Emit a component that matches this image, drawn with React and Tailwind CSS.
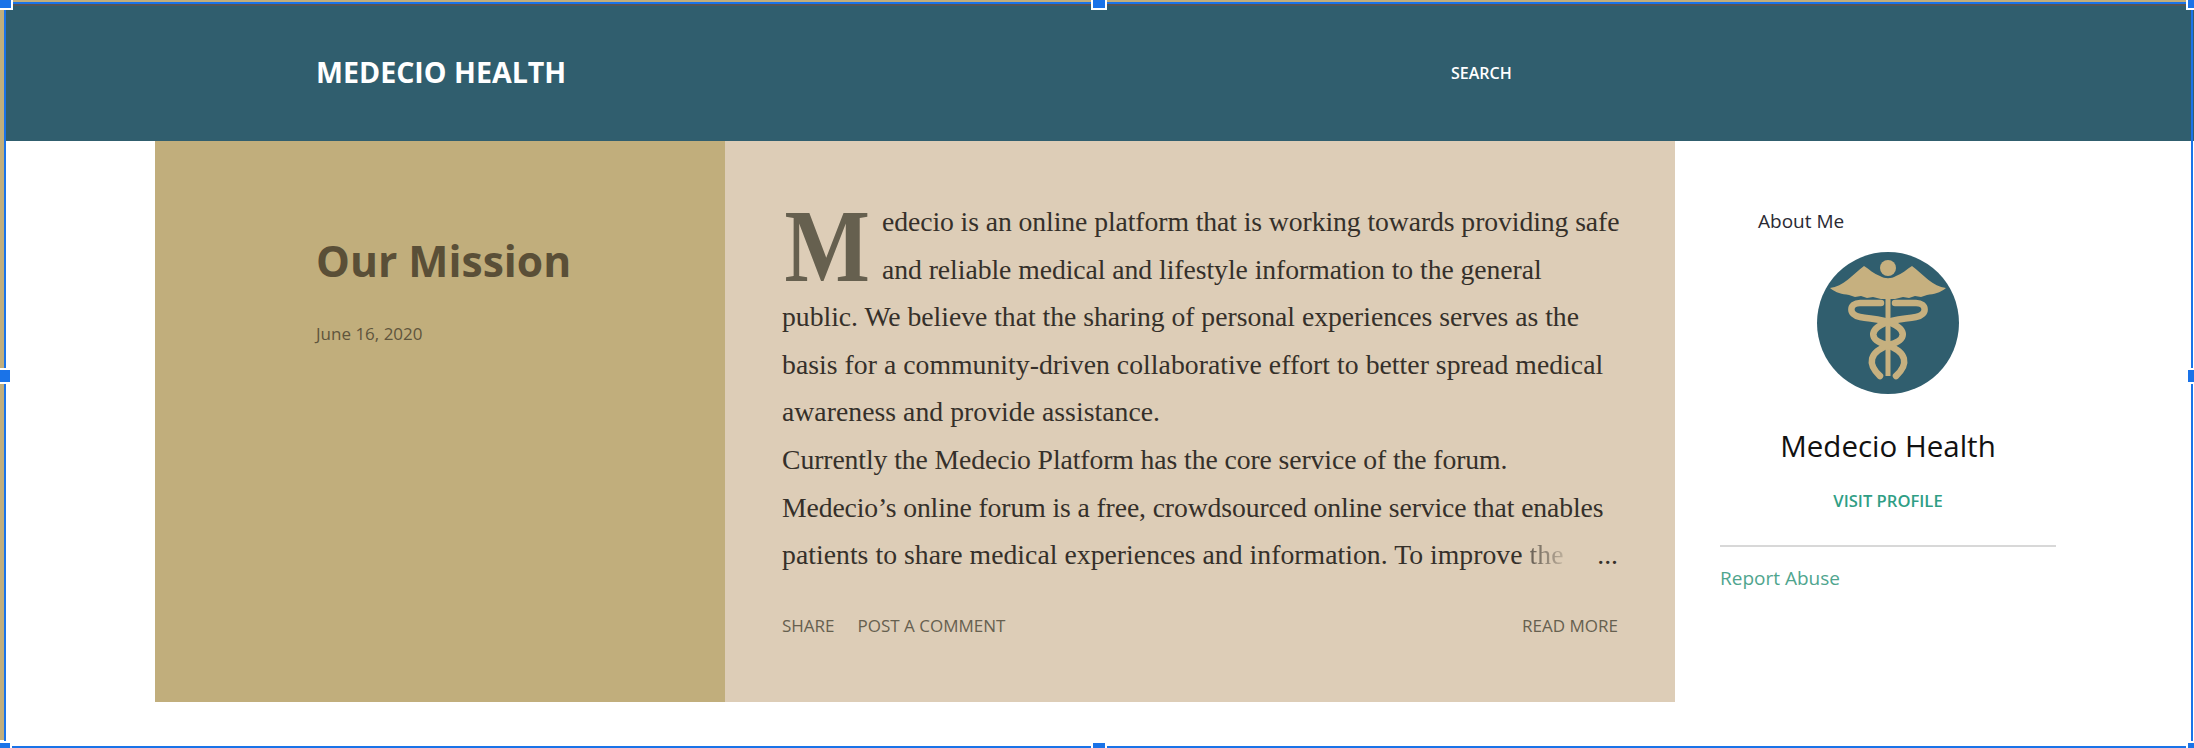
const lines = [
  { text: 'public. We believe that the sharing of personal experiences serves as the', fit: 'tracking-[-0.02px]' },
  { text: 'basis for a community-driven collaborative effort to better spread medical', fit: 'tracking-[0.04px]' },
  { text: 'awareness and provide assistance.', fit: 'tracking-[0.04px]' },
  { text: 'Currently the Medecio Platform has the core service of the forum.', fit: 'tracking-[-0.09px]' },
  { text: 'Medecio’s online forum is a free, crowdsourced online service that enables', fit: 'tracking-[-0.11px]' },
];

const openSans = "font-['Open_Sans',sans-serif]";

const Caduceus = () => (
  <svg viewBox="0 0 142 142" className="w-[142px] h-[142px] rounded-full bg-[#305e6e]">
    <g fill="#c6b07f">
      <circle cx="71" cy="16" r="8" />
      <path d="M13 36 C26 35 36 22 47 14 C52 17 57 22 63 24 C68 27 74 27 79 24 C85 22 90 17 95 14 C106 22 116 35 129 36 C123 41 117 42 110 43 L104 45 L98 44 L92 46 L86 45 L78 47 L64 47 L56 45 L50 46 L44 44 L38 45 L32 43 C25 42 19 41 13 36 Z" />
      <rect x="68.5" y="40" width="5" height="84" />
    </g>
    <g fill="none" stroke="#c6b07f" strokeWidth="6.5" strokeLinecap="round">
      <path d="M64 51 H43 C32 51 31 63 43 65 C55 67 66 67 74 71 C90 78 90 88 72 93 C52 100 50 112 63 124" />
      <path d="M78 51 H99 C110 51 111 63 99 65 C87 67 76 67 68 71 C52 78 52 88 70 93 C90 100 92 112 79 124" />
    </g>
  </svg>
);

const Handle = ({ className }) => (
  <div className={`absolute w-4 h-4 bg-[#1a73e8] border-2 border-white ${className}`} />
);

export default function App() {
  return (
    <div className="relative w-[2194px] h-[748px] overflow-hidden bg-white">
      <div className="w-[2192px] h-[137px] ml-[5px] mt-[4px] bg-[#305e6e] flex items-center text-white">
        <div className={`${openSans} w-[1446px] pl-[311px] text-[28.6px] leading-none font-bold`}>MEDECIO HEALTH</div>
        <div className={`${openSans} text-[16px] font-semibold`}>SEARCH</div>
      </div>

      <main className="flex pl-[155px] items-start">
        <section className="w-[570px] h-[561px] shrink-0 bg-[#c1ae7c] pl-[161px] pt-[91px]">
          <h1 className={`${openSans} text-[42.6px] leading-[56px] font-bold text-[#5a4f37]`}>Our Mission</h1>
          <p className={`${openSans} mt-[34px] text-[17px] leading-6 text-[#5f553c]`}>June 16, 2020</p>
        </section>

        <article className="w-[950px] h-[561px] shrink-0 bg-[#ddcdb7] pl-[57px] pr-[57px] pt-[57px]">
          <div className="font-['Liberation_Serif',serif] text-[27.7px] leading-[47.6px] text-[#35302a] whitespace-nowrap">
            <span className="float-left w-[100px] h-[95px] pl-[3px] text-[104px] leading-[95px] font-bold text-[#66604f] origin-left scale-x-[.87]">M</span>
            <div className="tracking-[-0.08px]">edecio is an online platform that is working towards providing safe</div>
            <div className="tracking-[-0.05px]">and reliable medical and lifestyle information to the general</div>
            {lines.map((line) => (
              <div key={line.text} className={`clear-left ${line.fit}`}>{line.text}</div>
            ))}
            <div className="flex justify-between">
              <span className="tracking-[0.04px]">
                patients to share medical experiences and information. To improve <span className="bg-linear-to-r from-[#35302a]/70 to-[#35302a]/20 bg-clip-text text-transparent">the</span>
              </span>
              <span>...</span>
            </div>
          </div>

          <div className={`${openSans} flex mt-[35px] text-[17px] leading-6 text-[#66604f]`}>
            <span>SHARE</span>
            <span className="ml-[23px]">POST A COMMENT</span>
            <span className="ml-auto">READ MORE</span>
          </div>
        </article>

        <aside className={`${openSans} w-[336px] ml-[45px] pt-[68px]`}>
          <h2 className="pl-[38px] text-[19px] leading-6 text-[#2a2a33]">About Me</h2>
          <div className="flex flex-col items-center">
            <div className="mt-[19px]"><Caduceus /></div>
            <div className="mt-[34px] text-[29.5px] leading-9 text-[#111]">Medecio Health</div>
            <div className="mt-[25px] text-[16.6px] leading-6 font-semibold text-[#2f9e85]">VISIT PROFILE</div>
          </div>
          <hr className="mt-[32px] border-t-2 border-[#d8d8d8]" />
          <div className="mt-[19px] text-[19px] leading-6 text-[#4fa58e]">Report Abuse</div>
        </aside>
      </main>

      {/* selection frame from the editor */}
      <div className="absolute inset-x-0 top-0 h-[2px] bg-[#c1ae7c]" />
      <div className="absolute left-0 top-0 w-[4px] h-[740px] bg-[#c1ae7c]" />
      <div className="absolute left-[4px] right-[1px] top-[2px] bottom-0 border-2 border-[#1a73e8]" />
      <div className="absolute left-[6px] right-[3px] top-[4px] h-[2px] bg-[#555]" />
      <Handle className="left-[-3px] top-[-6px]" />
      <Handle className="left-[1091px] top-[-6px]" />
      <Handle className="right-[-8px] top-[-6px]" />
      <Handle className="left-[-4px] top-[368px]" />
      <Handle className="right-[-8px] top-[368px]" />
      <Handle className="left-[-4px] bottom-[-9px]" />
      <Handle className="left-[1091px] bottom-[-9px]" />
      <Handle className="right-[-8px] bottom-[-9px]" />
    </div>
  );
}
